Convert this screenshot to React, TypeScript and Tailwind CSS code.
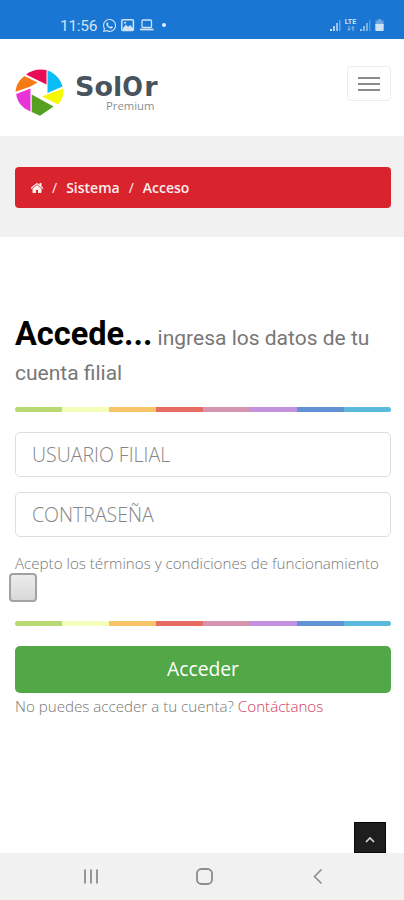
import { FaWhatsapp } from 'react-icons/fa'

function StatusBar() {
  return (
    <div className="flex h-[39px] items-start bg-[#1976d2] pl-[60px] pr-[20px] pt-[17px] text-[#cfe2f6]">
      <span className="w-[42px] whitespace-nowrap font-['Roboto',sans-serif] text-[15.5px] leading-[18px] tracking-[-0.3px]">11:56</span>
      <FaWhatsapp className="mt-px h-[15px] w-[15px]" />
      <svg className="ml-[4px] mt-[2px]" width="14" height="13" viewBox="0 0 14 13" fill="none">
        <rect x="0.8" y="0.8" width="11.6" height="10.6" rx="1" stroke="currentColor" strokeWidth="1.5" />
        <path d="M2 10V9l3-3.5L7 8l2-2 3 3v2H2z" fill="currentColor" />
        <circle cx="4" cy="3.8" r="1" fill="currentColor" />
      </svg>
      <svg className="ml-[5px] mt-[2px]" width="14" height="13" viewBox="0 0 14 13" fill="none">
        <rect x="2" y="1" width="9.5" height="7.5" rx="1" stroke="currentColor" strokeWidth="1.3" />
        <path d="M0 10.5h13.5" stroke="currentColor" strokeWidth="1.8" />
      </svg>
      <span className="ml-[8px] mt-[6px] h-[4px] w-[4px] rounded-full bg-[#e3effb]" />

      <div className="ml-auto flex pt-[2px]">
        <Signal />
        <div className="ml-[3px] flex w-[13px] flex-col items-center font-['Roboto',sans-serif] text-[7px] font-bold leading-[7px]">
          <span>LTE</span>
          <svg width="8" height="5" viewBox="0 0 8 5" fill="none" stroke="currentColor" strokeWidth="1" opacity="0.7">
            <path d="M2 0v4M0.5 2.8 2 4.5 3.5 2.8M6 5V1M4.5 2.2 6 0.5 7.5 2.2" />
          </svg>
        </div>
        <div className="ml-[3px] opacity-75">
          <Signal />
        </div>
        <svg className="ml-[4px]" width="9" height="12" viewBox="0 0 9 12" fill="currentColor">
          <path d="M3 0h3v1.5h2.5V4h-8V1.5H3z" opacity="0.45" />
          <rect x="0.3" y="4.5" width="8.4" height="7.5" rx="0.8" />
        </svg>
      </div>
    </div>
  )
}

function Signal() {
  return (
    <svg width="11" height="12" viewBox="0 0 11 12" fill="currentColor">
      <rect x="0" y="10" width="2" height="2" />
      <rect x="3" y="7" width="2" height="5" opacity="0.8" />
      <rect x="6" y="4" width="2" height="8" opacity="0.7" />
      <rect x="9" y="1" width="1.5" height="11" opacity="0.45" />
    </svg>
  )
}

function Logo() {
  return (
    <div className="flex">
      <svg width="50" height="48" viewBox="0 0 50 48">
        <path d="M11 5.5C17 1 24-0.5 31.5 1V15.5Z" fill="#e90b55" />
        <path d="M32.5 1.5C40 4 45.5 10 47.5 17.5L32.5 24Z" fill="#0cbcf6" />
        <path d="M48.3 19.5C49 26 47 31 43 35.5L27 27.5Z" fill="#f6f900" />
        <path d="M16.7 25.5 38.5 37.5 25 46.7 16.7 43Z" fill="#55a021" />
        <path d="M1.2 25 15.5 19.5V42.5C7 39 2.2 33 1.2 25Z" fill="#e933d9" />
        <path d="M0.5 22.8C1 16 4.5 10.5 9.5 7L22.5 13.5 15.5 17.5Z" fill="#f47a16" />
      </svg>
      <div className="flex w-[93px] flex-col pl-[10px] pt-[4px]">
        <span className="whitespace-nowrap font-['DejaVu_Sans',sans-serif] text-[27px] font-bold leading-[28px] text-[#47535d]">
          Sol<span className="-mx-[1px] inline-block scale-x-[0.9]">O</span>
          <span className="pl-px">r</span>
        </span>
        <span className="pl-[31px] font-['Open_Sans',sans-serif] text-[11.3px] leading-[10px] text-[#898f94]">Premium</span>
      </div>
    </div>
  )
}

function HomeIcon() {
  return (
    <svg width="14" height="14" viewBox="0 0 1792 1792" fill="currentColor">
      <path d="M1472 992v480q0 26-19 45t-45 19h-384v-384h-256v384h-384q-26 0-45-19t-19-45v-480q0-1 .5-3t.5-3l575-474 575 474q1 2 1 6zm223-69l-62 74q-8 9-21 11h-3q-13 0-21-7l-692-577-692 577q-12 8-24 7-13-2-21-11l-62-74q-8-10-7-23.5t11-21.5l719-599q32-26 76-26t76 26l244 204v-195q0-14 9-23t23-9h192q14 0 23 9t9 23v408l219 182q10 8 11 21.5t-7 23.5z" />
    </svg>
  )
}

function RainbowLine() {
  return (
    <div className="flex h-[5px] overflow-hidden rounded-full">
      <span className="flex-1 bg-[#b8d971]" />
      <span className="flex-1 bg-[#f4fdba]" />
      <span className="flex-1 bg-[#f7c568]" />
      <span className="flex-1 bg-[#e76d64]" />
      <span className="flex-1 bg-[#d594b0]" />
      <span className="flex-1 bg-[#c292df]" />
      <span className="flex-1 bg-[#6292d6]" />
      <span className="flex-1 bg-[#5bb9dc]" />
    </div>
  )
}

export default function App(): React.ReactElement {
  return (
    <div className="flex h-[900px] w-[404px] flex-col overflow-hidden bg-white font-['Open_Sans',sans-serif]">
      <StatusBar />

      <header className="flex h-[97px] items-start justify-between pl-[15px] pr-[13px] pt-[30px]">
        <Logo />
        <button className="-mt-[3px] flex h-[35px] w-[44px] flex-col items-center justify-center gap-[4px] rounded-[4px] border border-[#ececec]">
          <span className="h-[2px] w-[22px] bg-[#8b8b8b]" />
          <span className="h-[2px] w-[22px] bg-[#8b8b8b]" />
          <span className="h-[2px] w-[22px] bg-[#8b8b8b]" />
        </button>
      </header>

      {/* Breadcrumb */}
      <section className="h-[101px] bg-[#f1f1f1] pl-[15px] pr-[13px] pt-[31px]">
        <nav className="flex h-[41px] items-center rounded-[4px] bg-[#d9232d] pl-[15px] text-[14px] font-semibold text-[#fdeeee]">
          <HomeIcon />
          <span className="ml-[8px] font-normal">/</span>
          <span className="ml-[9px]">Sistema</span>
          <span className="ml-[9px] font-normal">/</span>
          <span className="ml-[9px]">Acceso</span>
        </nav>
      </section>

      <main className="flex flex-1 flex-col pl-[15px] pr-[13px] pt-[80px]">
        <h1 className="whitespace-nowrap font-['Roboto',sans-serif] text-[32.5px] font-bold leading-[35px] text-black">
          Accede...
          <small className="text-[21px] font-normal leading-none text-[#777]">
            {' '}ingresa los datos de tu
            <br />
            cuenta filial
          </small>
        </h1>
        <div className="mt-[20px]">
          <RainbowLine />
        </div>
        <input
          className="mt-[20px] h-[45px] rounded-[5px] border border-[#dedede] px-[16px] text-[19.5px] font-light placeholder:text-[#858585]"
          placeholder="USUARIO FILIAL"
        />
        <input
          className="mt-[15px] h-[45px] rounded-[5px] border border-[#dedede] px-[16px] text-[19.5px] font-light placeholder:text-[#858585]"
          placeholder="CONTRASEÑA"
        />
        <label className="mt-[16px] flex flex-col text-[15.15px] font-light leading-[20px] text-[#777]">
          <span className="whitespace-nowrap">Acepto los términos y condiciones de funcionamiento</span>
          <span className="-ml-[6px] h-[29px] w-[28px] rounded-[4px] border-2 border-[#a2a2a2] bg-linear-to-b from-[#ececec] to-[#d9d9d9]" />
        </label>
        <div className="mt-[19px]">
          <RainbowLine />
        </div>
        <button className="mt-[20px] h-[47px] rounded-[5px] bg-[#52a846] text-[19.3px] text-white">Acceder</button>
        <p className="mt-[3px] whitespace-nowrap text-[15.15px] font-light leading-[20px] text-[#777]">
          No puedes acceder a tu cuenta? <a className="text-[#d03a57]">Contáctanos</a>
        </p>
        <button className="mr-[5px] mt-auto flex h-[31px] w-[32px] items-center justify-center self-end border border-[#080808] bg-[#1e1e1e]">
          <svg className="mt-[3px]" width="10" height="7" viewBox="0 0 10 7" fill="none" stroke="#d5d5d5" strokeWidth="1.7">
            <path d="M1 6 5 2l4 4" />
          </svg>
        </button>
      </main>

      {/* Android navigation */}
      <footer className="flex h-[47px] items-center bg-[#f1f1f1] pl-[83px] text-[#8c8c8c]">
        <svg width="16" height="16" viewBox="0 0 16 16" stroke="currentColor" strokeWidth="1.8">
          <path d="M2 0.5v14M8 0.5v14M14 0.5v14" />
        </svg>
        <svg className="ml-[97px]" width="17" height="17" viewBox="0 0 17 17" fill="none" stroke="currentColor" strokeWidth="1.8">
          <rect x="1" y="1" width="15" height="15" rx="4.5" />
        </svg>
        <svg className="ml-[100px]" width="10" height="16" viewBox="0 0 10 16" fill="none" stroke="currentColor" strokeWidth="1.6">
          <path d="M8.5 0.5 1.5 7.5l7 7" />
        </svg>
      </footer>
    </div>
  )
}
